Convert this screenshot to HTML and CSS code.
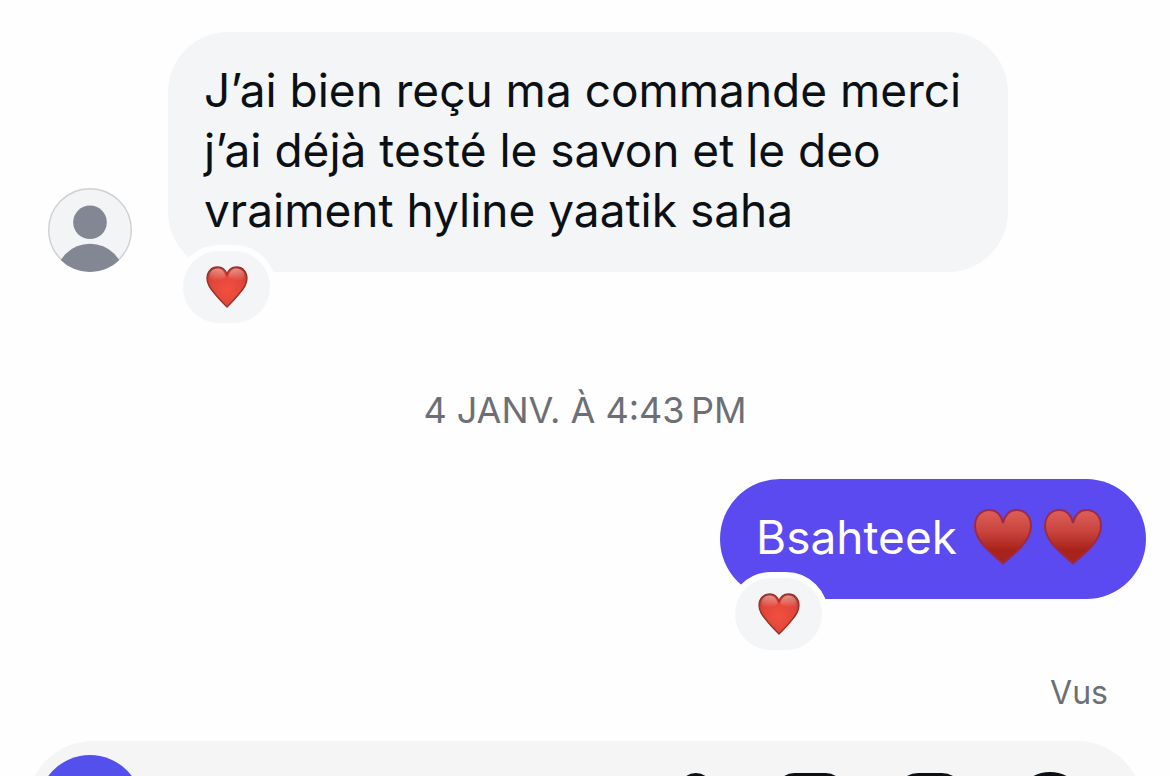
FILE: index.html
```html
<!DOCTYPE html>
<html lang="fr">
<head>
<meta charset="utf-8">
<meta name="viewport" content="width=device-width, initial-scale=1">
<title>Messages</title>
<link rel="stylesheet" href="styles.css">
</head>
<body>
<svg class="defs" aria-hidden="true">
  <defs>
    <radialGradient id="gloss" cx="0.5" cy="0.55" r="0.62">
      <stop offset="0" stop-color="#f1503f"/>
      <stop offset="0.7" stop-color="#e04538"/>
      <stop offset="1" stop-color="#b8352b"/>
    </radialGradient>
    <linearGradient id="shine" x1="0" y1="0" x2="0" y2="1">
      <stop offset="0" stop-color="#ffffff" stop-opacity="0.45"/>
      <stop offset="1" stop-color="#ffffff" stop-opacity="0"/>
    </linearGradient>
    <linearGradient id="suit" x1="0" y1="0" x2="0" y2="1">
      <stop offset="0" stop-color="#de605a"/>
      <stop offset="0.4" stop-color="#c8443d"/>
      <stop offset="0.75" stop-color="#a9221a"/>
      <stop offset="1" stop-color="#a32520"/>
    </linearGradient>
    <symbol id="heart" viewBox="0 0 42 42">
      <path d="M21 41C17.500 37.500 13 33 9 28C4 22 1 18 1 12.500C1 5.500 5.500 1 11.500 1C16 1 19.500 3.500 21 8.500C22.500 3.500 26 1 30.500 1C36.500 1 41 5.500 41 12.500C41 18 38 22 33 28C29 33 24.500 37.500 21 41Z" fill="url(#gloss)" stroke="#94322b" stroke-width="1.300"/>
      <path d="M3.500 13C2.500 6.500 6.500 2.500 11.500 2.500C15.500 2.500 18.500 5 19.500 11C15 15 8 15 3.500 13ZM38.500 13C39.500 6.500 35.500 2.500 30.500 2.500C26.500 2.500 23.500 5 22.500 11C27 15 34 15 38.500 13Z" fill="url(#shine)"/>
    </symbol>
    <symbol id="suit-heart" viewBox="0 0 58 56">
      <path d="M29 54.500C24 50 17 44.500 11 38C5 31.500 1 25 1 17C1 7.500 7 1 15.500 1C22 1 27 5.500 29 14C31 5.500 36 1 42.500 1C51 1 57 7.500 57 17C57 25 53 31.500 47 38C41 44.500 34 50 29 54.500Z" fill="url(#suit)" stroke="#9d2a45" stroke-width="2"/>
    </symbol>
  </defs>
</svg>
<main class="chat">
  <section class="row row-in">
    <svg class="avatar" viewBox="0 0 84 84" role="img" aria-label="Profil">
      <clipPath id="face"><circle cx="42" cy="42" r="42"/></clipPath>
      <circle cx="42" cy="42" r="41.300" fill="#f3f4f6" stroke="#cfd0d3" stroke-width="1.400"/>
      <g clip-path="url(#face)" fill="#838793">
        <circle cx="42" cy="34.300" r="16.800"/>
        <circle cx="42" cy="90" r="34.300"/>
      </g>
    </svg>
    <div class="bubble bubble-in">
      <p class="text">J’ai bien reçu ma commande merci<br>j’ai déjà testé le savon et le deo<br>vraiment hyline yaatik saha</p>
      <button class="reaction" aria-label="Réaction cœur"><svg class="heart"><use href="#heart"/></svg></button>
    </div>
  </section>
  <time class="stamp">4 JANV. À 4:43&#8239;PM</time>
  <section class="row row-out">
    <div class="bubble bubble-out">
      <p class="text">Bsahteek</p>
      <svg class="suit" role="img" aria-label="Cœur"><use href="#suit-heart"/></svg>
      <svg class="suit" role="img" aria-label="Cœur"><use href="#suit-heart"/></svg>
      <button class="reaction" aria-label="Réaction cœur"><svg class="heart"><use href="#heart"/></svg></button>
    </div>
  </section>
  <p class="seen">Vus</p>
  <form class="composer">
    <button class="camera" type="button" aria-label="Appareil photo"></button>
    <input class="field" type="text" aria-label="Message">
    <div class="tools">
      <button class="tool" type="button" aria-label="Micro">
        <svg viewBox="-1 -1 74 74"><rect x="28" y="4" width="28" height="42" rx="14"/><path d="M18 32v4a24 24 0 0 0 48 0v-4M42 60v10"/></svg>
      </button>
      <button class="tool" type="button" aria-label="Galerie">
        <svg viewBox="-1 -1 74 74"><rect x="4" y="4" width="64" height="64" rx="16"/><path d="M6 58l20-22 28 32"/><circle cx="50" cy="24" r="6"/></svg>
      </button>
      <button class="tool" type="button" aria-label="Autocollants">
        <svg viewBox="-1 -1 74 74"><path d="M24 4h24a20 20 0 0 1 20 20v18L42 68H24A20 20 0 0 1 4 48V24A20 20 0 0 1 24 4zM68 42H54a12 12 0 0 0-12 12v14"/></svg>
      </button>
      <button class="tool" type="button" aria-label="Plus">
        <svg viewBox="-1 -1 74 74"><circle cx="36" cy="36" r="33"/><path d="M36 20v32M20 36h32"/></svg>
      </button>
    </div>
  </form>
</main>
</body>
</html>
```
FILE: styles.css
```css
* {
  box-sizing: border-box;
}

body {
  margin: 0;
  background: #fefefe;
  color: #0b1014;
  font-family: Inter, "Noto Sans", sans-serif;
}

p {
  margin: 0;
}

button {
  border: 0;
  padding: 0;
  background: none;
}

.defs {
  position: absolute;
  width: 0;
  height: 0;
}

.chat {
  display: flex;
  flex-direction: column;
  height: 100vh;
  overflow: hidden;
  padding: 32px 24px 0;
}

.chat > * {
  flex-shrink: 0;
}

.row {
  display: flex;
  align-items: flex-end;
}

.row-in {
  gap: 36px;
  padding-left: 24px;
}

.row-out {
  justify-content: flex-end;
}

.avatar {
  width: 84px;
  height: 84px;
  flex-shrink: 0;
}

.bubble {
  position: relative;
  display: flex;
  align-items: center;
  padding: 28px 36px 32px;
  border-radius: 60px;
}

.bubble-in {
  width: 840px;
  background: #f3f5f7;
}

.bubble-out {
  gap: 12px;
  padding-right: 44px;
  background: #5b4aef;
  color: #ffffff;
}

.text {
  font-size: 46px;
  line-height: 60px;
}

.bubble-out .text {
  margin-right: 5px;
}

.suit {
  width: 58px;
  height: 56px;
}

.reaction {
  position: absolute;
  left: 9px;
  bottom: -57px;
  display: flex;
  align-items: center;
  justify-content: center;
  box-sizing: content-box;
  width: 87px;
  height: 72px;
  border: 6px solid #fefefe;
  border-radius: 42px;
  background: #f3f5f7;
}

.heart {
  width: 42px;
  height: 42px;
}

.stamp {
  margin: 116px 0 46px;
  color: #6c7075;
  font-size: 36px;
  line-height: 45px;
  text-align: center;
}

.seen {
  margin: 72px 38px 26px;
  color: #6c7075;
  font-size: 32px;
  line-height: 44px;
  text-align: right;
}

.composer {
  display: flex;
  align-items: center;
  height: 132px;
  margin: 0 3px;
  padding: 0 57px 0 11px;
  border-radius: 66px;
  background: #f5f5f5;
}

.camera {
  width: 104px;
  height: 104px;
  border-radius: 50%;
  background: #5350ec;
}

.field {
  flex: 1;
  min-width: 0;
  height: 72px;
  border: 0;
  outline: 0;
  background: transparent;
  font: inherit;
  font-size: 46px;
}

.tools {
  display: flex;
  gap: 48px;
}

.tool {
  width: 72px;
  height: 72px;
}

.tool svg {
  display: block;
  fill: none;
  stroke: #0b1014;
  stroke-width: 6;
  stroke-linecap: round;
  stroke-linejoin: round;
}
```
